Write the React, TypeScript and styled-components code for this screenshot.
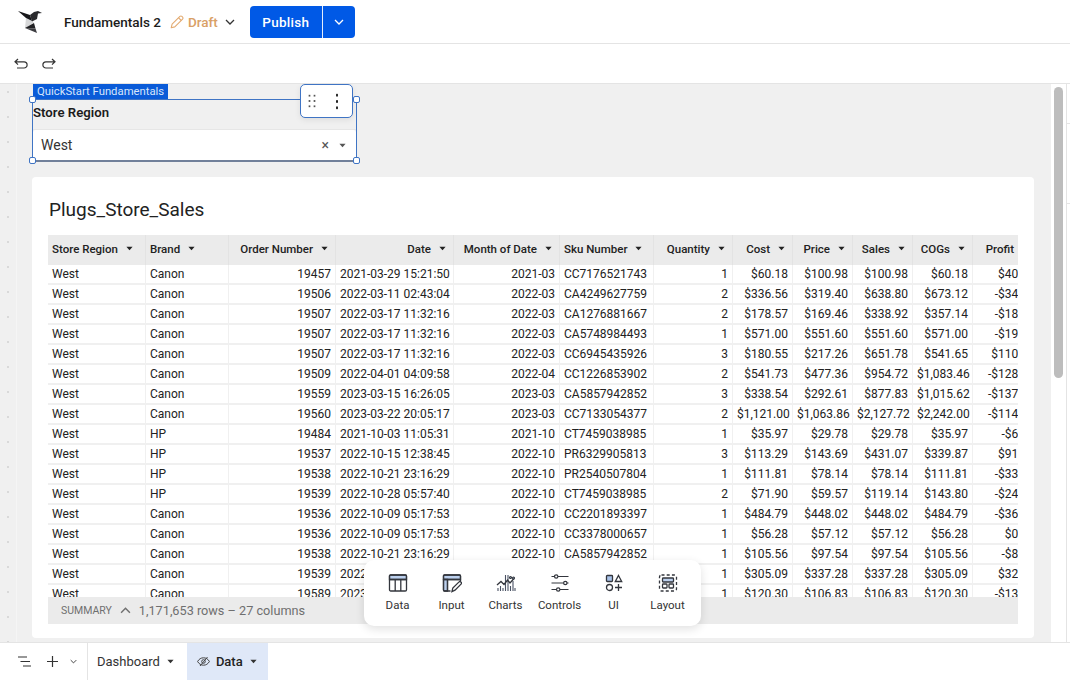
import styled, { createGlobalStyle } from "styled-components";

const GlobalStyle = createGlobalStyle`
  html, body {
    margin: 0;
    padding: 0;
    background: #fff;
    overflow: hidden;
  }
  * {
    box-sizing: border-box;
  }
  body {
    font-family: Roboto, "Noto Sans", sans-serif;
    color: #1c1c1c;
  }
`;

type Align = "left" | "right";

const columns: { name: string; width: number; align: Align; headerPad?: number }[] = [
  { name: "Store Region", width: 97, align: "left" },
  { name: "Brand", width: 82, align: "left" },
  { name: "Order Number", width: 106, align: "right" },
  { name: "Date", width: 117, align: "right" },
  { name: "Month of Date", width: 105, align: "right" },
  { name: "Sku Number", width: 93, align: "left" },
  { name: "Quantity", width: 78, align: "right" },
  { name: "Cost", width: 59, align: "right" },
  { name: "Price", width: 59, align: "right" },
  { name: "Sales", width: 59, align: "right" },
  { name: "COGs", width: 59, align: "right" },
  { name: "Profit", width: 66, align: "right", headerPad: 10 },
];

const rows = [
  ["West", "Canon", "19457", "2021-03-29 15:21:50", "2021-03", "CC7176521743", "1", "$60.18", "$100.98", "$100.98", "$60.18", "$40.80"],
  ["West", "Canon", "19506", "2022-03-11 02:43:04", "2022-03", "CA4249627759", "2", "$336.56", "$319.40", "$638.80", "$673.12", "-$34.32"],
  ["West", "Canon", "19507", "2022-03-17 11:32:16", "2022-03", "CA1276881667", "2", "$178.57", "$169.46", "$338.92", "$357.14", "-$18.22"],
  ["West", "Canon", "19507", "2022-03-17 11:32:16", "2022-03", "CA5748984493", "1", "$571.00", "$551.60", "$551.60", "$571.00", "-$19.40"],
  ["West", "Canon", "19507", "2022-03-17 11:32:16", "2022-03", "CC6945435926", "3", "$180.55", "$217.26", "$651.78", "$541.65", "$110.13"],
  ["West", "Canon", "19509", "2022-04-01 04:09:58", "2022-04", "CC1226853902", "2", "$541.73", "$477.36", "$954.72", "$1,083.46", "-$128.74"],
  ["West", "Canon", "19559", "2023-03-15 16:26:05", "2023-03", "CA5857942852", "3", "$338.54", "$292.61", "$877.83", "$1,015.62", "-$137.79"],
  ["West", "Canon", "19560", "2023-03-22 20:05:17", "2023-03", "CC7133054377", "2", "$1,121.00", "$1,063.86", "$2,127.72", "$2,242.00", "-$114.28"],
  ["West", "HP", "19484", "2021-10-03 11:05:31", "2021-10", "CT7459038985", "1", "$35.97", "$29.78", "$29.78", "$35.97", "-$6.19"],
  ["West", "HP", "19537", "2022-10-15 12:38:45", "2022-10", "PR6329905813", "3", "$113.29", "$143.69", "$431.07", "$339.87", "$91.20"],
  ["West", "HP", "19538", "2022-10-21 23:16:29", "2022-10", "PR2540507804", "1", "$111.81", "$78.14", "$78.14", "$111.81", "-$33.67"],
  ["West", "HP", "19539", "2022-10-28 05:57:40", "2022-10", "CT7459038985", "2", "$71.90", "$59.57", "$119.14", "$143.80", "-$24.66"],
  ["West", "Canon", "19536", "2022-10-09 05:17:53", "2022-10", "CC2201893397", "1", "$484.79", "$448.02", "$448.02", "$484.79", "-$36.77"],
  ["West", "Canon", "19536", "2022-10-09 05:17:53", "2022-10", "CC3378000657", "1", "$56.28", "$57.12", "$57.12", "$56.28", "$0.84"],
  ["West", "Canon", "19538", "2022-10-21 23:16:29", "2022-10", "CA5857942852", "1", "$105.56", "$97.54", "$97.54", "$105.56", "-$8.02"],
  ["West", "Canon", "19539", "2022-10-28 05:57:40", "2022-10", "CC7176521743", "1", "$305.09", "$337.28", "$337.28", "$305.09", "$32.19"],
  ["West", "Canon", "19589", "2023-04-02 09:41:12", "2023-04", "CA4249627759", "1", "$120.30", "$106.83", "$106.83", "$120.30", "-$13.47"],
];

const gridTemplate = columns.map((c) => `${c.width}px`).join(" ");

const Caret = () => (
  <CaretIcon viewBox="0 0 8 5">
    <path d="M0.5 0.5h7L4 4.6z" fill="currentColor" />
  </CaretIcon>
);

const Logo = () => (
  <svg width="28" height="24" viewBox="0 0 28 24">
    <path d="M1 1l12 4 2 6-6-3z" fill="#17171a" />
    <path d="M13 5l4-3 4-1 4 2-4 .5-1 5.5-5 2.5z" fill="#2a2a2d" />
    <path d="M9 8l6 3 2 1.5-9 6z" fill="#8d8e92" opacity="0.35" />
    <path d="M8 18l9-5 1.5 5.5z" fill="#222225" />
    <path d="M8 18l10.5.5 1.5 4.5z" fill="#3c3c40" />
  </svg>
);

const Pencil = () => (
  <svg width="14" height="14" viewBox="0 0 14 14" fill="none" stroke="#e3ab72" strokeWidth="1.1">
    <path d="M1.2 12.8l.9-3.6L9.9 1.4a1.4 1.4 0 0 1 2 0l.7.7a1.4 1.4 0 0 1 0 2l-7.8 7.8z" strokeLinejoin="round" />
    <path d="M8.6 2.8l2.7 2.7" />
  </svg>
);

const Chevron = ({ size = 10, up = false }: { size?: number; up?: boolean }) => (
  <svg width={size} height={size} viewBox="0 0 10 10" fill="none" stroke="currentColor" strokeWidth="1.3">
    <path d={up ? "M1 7l4-4 4 4" : "M1 3l4 4 4-4"} />
  </svg>
);

const Undo = () => (
  <svg width="14" height="12" viewBox="0 0 14 12" fill="none" stroke="#333" strokeWidth="1.2">
    <path d="M4 1L1 3.8l3 2.8M1 3.8h9a3 3 0 0 1 0 6.2H3" />
  </svg>
);

const Redo = () => (
  <svg width="14" height="12" viewBox="0 0 14 12" fill="none" stroke="#333" strokeWidth="1.2">
    <path d="M10 1l3 2.8-3 2.8M13 3.8H4a3 3 0 0 0 0 6.2h7" />
  </svg>
);

const DataIcon = () => (
  <svg width="20" height="20" viewBox="0 0 20 20" fill="none" stroke="#33363d" strokeWidth="1.3">
    <path d="M2.5 2h15a1 1 0 0 1 1 1v3.5h-17V3a1 1 0 0 1 1-1z" fill="#bcd0ee" />
    <rect x="1.5" y="2" width="17" height="16" rx="1.2" />
    <path d="M1.5 6.5h17M7.2 6.5V18M12.8 6.5V18" />
  </svg>
);

const InputIcon = () => (
  <svg width="20" height="20" viewBox="0 0 20 20" fill="none" stroke="#33363d" strokeWidth="1.3">
    <path d="M1.5 3a1 1 0 0 1 1-1h15a1 1 0 0 1 1 1v3.5h-17z" fill="#bcd0ee" />
    <path d="M1.5 6.5h4V18h-3a1 1 0 0 1-1-1z" fill="#bcd0ee" />
    <path d="M18.5 8V3a1 1 0 0 0-1-1h-15a1 1 0 0 0-1 1v14a1 1 0 0 0 1 1h6M1.5 6.5h17M5.5 6.5V18" />
    <path d="M10 18.5l.8-3.4 6-6a1.4 1.4 0 0 1 2.2 2l-6 6z" fill="#fff" />
  </svg>
);

const ChartsIcon = () => (
  <svg width="20" height="20" viewBox="0 0 20 20" fill="none" stroke="#33363d" strokeWidth="1.1">
    <path d="M2 18v-3M4.5 18v-5M7 18v-3M9.5 18V2M12 18V2M14.5 18v-5M17 18V8M19 18v-3" stroke="#4a5264" />
    <path d="M1 12l4-3.5 3 3 3.5-4.5 2.5 3 4-4.5" strokeWidth="1.3" />
    <circle cx="14.5" cy="4.5" r="1" fill="#bcd0ee" />
    <circle cx="17.5" cy="5" r="1" fill="#bcd0ee" />
  </svg>
);

const ControlsIcon = () => (
  <svg width="20" height="20" viewBox="0 0 20 20" fill="none" stroke="#33363d" strokeWidth="1.2">
    <path d="M1.5 3.5h3M8 3.5h10.5M1.5 10h12M17 10h1.5M1.5 16.5h5M10 16.5h8.5" />
    <circle cx="6.2" cy="3.5" r="1.7" />
    <circle cx="15.3" cy="10" r="1.7" />
    <circle cx="8.2" cy="16.5" r="1.7" />
  </svg>
);

const UiIcon = () => (
  <svg width="20" height="20" viewBox="0 0 20 20" fill="none" stroke="#33363d" strokeWidth="1.3">
    <rect x="2.5" y="2.5" width="6" height="6" rx="0.8" fill="#a9c2e8" />
    <path d="M14.5 2.5l3.2 6h-6.4z" />
    <circle cx="5.5" cy="14.5" r="3" />
    <path d="M14.5 11v7M11 14.5h7" />
  </svg>
);

const LayoutIcon = () => (
  <svg width="20" height="20" viewBox="0 0 20 20" fill="none" stroke="#33363d" strokeWidth="1.3">
    <rect x="1.5" y="2" width="17" height="16" rx="2" strokeDasharray="3 2.2" />
    <rect x="4.5" y="5" width="11" height="4" rx="0.8" fill="#bcd0ee" />
    <rect x="4.5" y="11" width="4.5" height="4" rx="0.8" />
    <rect x="11" y="11" width="4.5" height="4" rx="0.8" />
  </svg>
);

const ListIcon = () => (
  <svg width="13" height="11" viewBox="0 0 13 11" fill="none" stroke="#333" strokeWidth="1.2">
    <path d="M0 1h9M2.5 5.5H12M5 10h8" />
  </svg>
);

const PlusIcon = () => (
  <svg width="11" height="11" viewBox="0 0 11 11" fill="none" stroke="#333" strokeWidth="1.2">
    <path d="M5.5 0v11M0 5.5h11" />
  </svg>
);

const EyeIcon = () => (
  <svg width="13" height="11" viewBox="0 0 13 11" fill="none" stroke="#444" strokeWidth="1">
    <path d="M.6 5.5C2 3 4 1.8 6.5 1.8S11 3 12.4 5.5C11 8 9 9.2 6.5 9.2S2 8 .6 5.5z" />
    <circle cx="6.5" cy="5.5" r="1.8" />
    <path d="M10.5 1L3 10" />
  </svg>
);

const dockItems = [
  { label: "Data", icon: <DataIcon /> },
  { label: "Input", icon: <InputIcon /> },
  { label: "Charts", icon: <ChartsIcon /> },
  { label: "Controls", icon: <ControlsIcon /> },
  { label: "UI", icon: <UiIcon /> },
  { label: "Layout", icon: <LayoutIcon /> },
];

const App = () => {
  return (
    <>
      <GlobalStyle />
      <Page>
        <TopBar>
          <LogoSlot>
            <Logo />
          </LogoSlot>
          <DocTitle>Fundamentals 2</DocTitle>
          <DraftGroup>
            <Pencil />
            <DraftText>Draft</DraftText>
          </DraftGroup>
          <DraftChevron>
            <Chevron />
          </DraftChevron>
          <PublishGroup>
            <PublishButton>Publish</PublishButton>
            <PublishMenu>
              <Chevron />
            </PublishMenu>
          </PublishGroup>
        </TopBar>

        <ActionBar>
          <Undo />
          <Redo />
        </ActionBar>

        <Main>
          <Canvas>
            <Rail />
            <CanvasContent>
              <ControlWidget>
                <WidgetTag>QuickStart Fundamentals</WidgetTag>
                <WidgetTools>
                  <DragDots />
                  <MoreDots />
                </WidgetTools>
                <Handle $side="left" $edge="top" />
                <Handle $side="right" $edge="top" />
                <Handle $side="left" $edge="bottom" />
                <Handle $side="right" $edge="bottom" />
                <ControlLabel>Store Region</ControlLabel>
                <ControlInput>
                  <span>West</span>
                  <InputActions>
                    <ClearMark>×</ClearMark>
                    <Caret />
                  </InputActions>
                </ControlInput>
              </ControlWidget>

              <TableCard>
                <CardTitle>Plugs_Store_Sales</CardTitle>
                <TableFrame>
                  <HeaderRow>
                    {columns.map((col) => (
                      <HeaderCell key={col.name} $align={col.align} $pad={col.headerPad ?? 7}>
                        {col.name}
                        <Caret />
                      </HeaderCell>
                    ))}
                  </HeaderRow>
                  <TableBody>
                    {rows.map((row, i) => (
                      <DataRow key={i}>
                        {row.map((value, j) => (
                          <DataCell key={j} $align={columns[j].align}>
                            {value}
                          </DataCell>
                        ))}
                      </DataRow>
                    ))}
                  </TableBody>
                  <SummaryBar>
                    <SummaryLabel>SUMMARY</SummaryLabel>
                    <Chevron size={11} up />
                    <SummaryCount>1,171,653 rows – 27 columns</SummaryCount>
                  </SummaryBar>
                </TableFrame>
                <Dock>
                  {dockItems.map((item) => (
                    <DockItem key={item.label}>
                      {item.icon}
                      <DockLabel>{item.label}</DockLabel>
                    </DockItem>
                  ))}
                </Dock>
              </TableCard>
            </CanvasContent>
          </Canvas>
          <ScrollGutter>
            <ScrollThumb />
          </ScrollGutter>
          <SidePanel>
            <SideRow $height={40} />
            <SideRow $height={80} />
          </SidePanel>
        </Main>

        <BottomBar>
          <BarTools>
            <ListIcon />
            <PlusIcon />
            <SmallChevron>
              <Chevron size={7} />
            </SmallChevron>
          </BarTools>
          <Tab>
            Dashboard
            <Caret />
          </Tab>
          <Tab $active>
            <EyeIcon />
            <b>Data</b>
            <Caret />
          </Tab>
        </BottomBar>
      </Page>
    </>
  );
};

const Page = styled.div`
  width: 1070px;
  height: 680px;
  display: flex;
  flex-direction: column;
  overflow: hidden;
`;
const TopBar = styled.header`
  height: 44px;
  flex: none;
  display: flex;
  align-items: center;
  border-bottom: 1px solid #e4e4e4;
  padding-left: 17px;
`;
const LogoSlot = styled.div`
  display: flex;
  width: 47px;
`;
const DocTitle = styled.div`
  font-size: 13.5px;
  font-weight: 500;
  margin-right: 9px;
`;
const DraftGroup = styled.div`
  display: flex;
  align-items: center;
  gap: 4px;
`;
const DraftText = styled.span`
  font-size: 13.5px;
  font-weight: 500;
  color: #d9a066;
`;
const DraftChevron = styled.div`
  display: flex;
  margin-left: 7px;
  color: #333;
`;
const PublishGroup = styled.div`
  display: flex;
  height: 32px;
  margin-left: 15px;
  border-radius: 4px;
  overflow: hidden;
  background: #0059e6;
  color: #fff;
`;
const PublishButton = styled.div`
  width: 73px;
  display: flex;
  align-items: center;
  justify-content: center;
  font-size: 13.5px;
  font-weight: 500;
  letter-spacing: 0.3px;
  border-right: 1px solid #e5edfb;
`;
const PublishMenu = styled.div`
  width: 32px;
  display: flex;
  align-items: center;
  justify-content: center;
`;
const ActionBar = styled.div`
  height: 40px;
  flex: none;
  display: flex;
  align-items: center;
  gap: 14px;
  padding-left: 14px;
  border-bottom: 1px solid #e4e4e4;
`;
const Main = styled.div`
  flex: 1;
  min-height: 0;
  display: flex;
`;
const Canvas = styled.div`
  width: 1051px;
  flex: none;
  display: flex;
  background: #f0f0f0;
  overflow: hidden;
`;
const Rail = styled.div`
  width: 17px;
  flex: none;
  border-right: 1px solid #f5f5f5;
  background-image: radial-gradient(circle at 8px 8px, #d9d9d9 0.8px, transparent 1px);
  background-size: 17px 25px;
`;
const CanvasContent = styled.div`
  flex: 1;
  min-width: 0;
  padding: 15px 17px 0 15px;
`;
const ControlWidget = styled.div`
  position: relative;
  width: 325px;
  height: 63px;
  border: 1px solid #3f74c4;
  border-bottom: 2px solid #71809a;
  margin-bottom: 15px;
  display: flex;
  flex-direction: column;
`;
const WidgetTag = styled.div`
  position: absolute;
  left: 0;
  top: -16px;
  width: 135px;
  height: 15px;
  padding-left: 4px;
  background: #0a5bd8;
  color: #d7e5fb;
  font-size: 11.3px;
  line-height: 16px;
  white-space: nowrap;
`;
const WidgetTools = styled.div`
  position: absolute;
  right: 3px;
  top: -16px;
  width: 53px;
  height: 34px;
  display: flex;
  align-items: center;
  justify-content: space-between;
  padding: 0 13px 0 6px;
  background: #fff;
  border: 1px solid #3f74c4;
  border-radius: 5px;
  box-shadow: 0 2px 6px rgba(0, 0, 0, 0.08);
  z-index: 2;
`;
const DragDots = styled.div`
  width: 10px;
  height: 16px;
  background-image: radial-gradient(circle, #555 0.9px, transparent 1.2px);
  background-size: 5px 5.33px;
`;
const MoreDots = styled.div`
  width: 4px;
  height: 19px;
  background-image: radial-gradient(circle, #222 1px, transparent 1.3px);
  background-size: 4px 6.33px;
`;
const Handle = styled.div<{ $side: "left" | "right"; $edge: "top" | "bottom" }>`
  position: absolute;
  ${(p) => p.$side}: -4px;
  ${(p) => p.$edge}: -4px;
  width: 7px;
  height: 7px;
  background: #fff;
  border: 1px solid #3f74c4;
  border-radius: 2px;
  z-index: 3;
`;
const ControlLabel = styled.div`
  height: 30px;
  padding-bottom: 5px;
  display: flex;
  align-items: center;
  font-size: 13.2px;
  font-weight: 600;
  border-bottom: 1px solid #e6e6e6;
`;
const ControlInput = styled.div`
  height: 30px;
  display: flex;
  align-items: center;
  justify-content: space-between;
  padding: 0 10px 0 8px;
  background: #fff;
  border-radius: 3px;
  font-size: 14px;
  color: #333;
`;
const InputActions = styled.div`
  display: flex;
  align-items: center;
  gap: 9px;
  color: #555;
`;
const ClearMark = styled.span`
  font-size: 14px;
  line-height: 1;
`;
const TableCard = styled.section`
  position: relative;
  height: 461px;
  padding: 20px 16px 0 16px;
  background: #fff;
  border-radius: 4px;
`;
const CardTitle = styled.h2`
  margin: 0 0 12px 1px;
  height: 26px;
  font-size: 19px;
  font-weight: 400;
  line-height: 26px;
  color: #222;
`;
const TableFrame = styled.div`
  width: 970px;
  height: 389px;
  display: flex;
  flex-direction: column;
  overflow: hidden;
`;
const HeaderRow = styled.div`
  flex: none;
  height: 30px;
  display: grid;
  grid-template-columns: ${gridTemplate};
  gap: 1px;
  background: #e3e3e3;
  width: max-content;
`;
const HeaderCell = styled.div<{ $align: Align; $pad: number }>`
  display: flex;
  align-items: center;
  justify-content: ${(p) => (p.$align === "right" ? "flex-end" : "flex-start")};
  gap: 7px;
  padding: 0 ${(p) => p.$pad}px 3px 4px;
  background: #ebebeb;
  font-size: 11.5px;
  font-weight: 500;
  color: #222;
  white-space: nowrap;
`;
const CaretIcon = styled.svg`
  width: 7px;
  height: 5px;
  flex: none;
  margin-left: 1px;
`;
const TableBody = styled.div`
  flex: 1;
  min-height: 0;
  overflow: hidden;
`;
const DataRow = styled.div`
  height: 20px;
  display: grid;
  grid-template-columns: ${gridTemplate};
  gap: 1px;
  width: max-content;
  background: #f0f0f0;
  padding-bottom: 2px;
`;
const DataCell = styled.div<{ $align: Align }>`
  padding: 0 4px;
  background: #fff;
  font-size: 12px;
  line-height: 18px;
  text-align: ${(p) => p.$align};
  color: #222;
  white-space: nowrap;
  overflow: hidden;
`;
const SummaryBar = styled.div`
  flex: none;
  height: 27px;
  display: flex;
  align-items: center;
  gap: 8px;
  padding-left: 13px;
  background: #ebebeb;
  color: #6f6f6f;
`;
const SummaryLabel = styled.span`
  font-size: 10.5px;
`;
const SummaryCount = styled.span`
  font-size: 12.7px;
`;
const Dock = styled.div`
  position: absolute;
  left: 332px;
  bottom: 12px;
  width: 337px;
  height: 66px;
  display: flex;
  justify-content: center;
  background: #fff;
  border-radius: 10px;
  box-shadow: 0 3px 10px rgba(0, 0, 0, 0.12);
`;
const DockItem = styled.div`
  width: 54px;
  display: flex;
  flex-direction: column;
  align-items: center;
  padding-top: 13px;
`;
const DockLabel = styled.span`
  margin-top: 5px;
  font-size: 11.5px;
  color: #333;
`;
const ScrollGutter = styled.div`
  width: 15px;
  flex: none;
  padding: 3px 3px;
  background: #fff;
`;
const ScrollThumb = styled.div`
  width: 9px;
  height: 291px;
  background: #bdbdbd;
  border-radius: 5px;
`;
const SidePanel = styled.div`
  flex: 1;
  border-left: 1px solid #e4e4e4;
`;
const SideRow = styled.div<{ $height: number }>`
  height: ${(p) => p.$height}px;
  border-bottom: 1px solid #e4e4e4;
`;
const BottomBar = styled.footer`
  height: 38px;
  flex: none;
  display: flex;
  border-top: 1px solid #e4e4e4;
`;
const BarTools = styled.div`
  width: 88px;
  flex: none;
  display: flex;
  align-items: center;
  gap: 16px;
  padding-left: 18px;
  border-right: 1px solid #e4e4e4;
`;
const SmallChevron = styled.div`
  display: flex;
  margin-left: -4px;
  color: #333;
`;
const Tab = styled.div<{ $active?: boolean }>`
  display: flex;
  align-items: center;
  gap: 6px;
  padding: ${(p) => (p.$active ? "0 11px 0 10px" : "0 13px 0 9px")};
  background: ${(p) => (p.$active ? "#dfe8f8" : "#fff")};
  font-size: 13px;
  color: #333;
  b {
    font-weight: 500;
    color: #222;
  }
`;

export default App;
